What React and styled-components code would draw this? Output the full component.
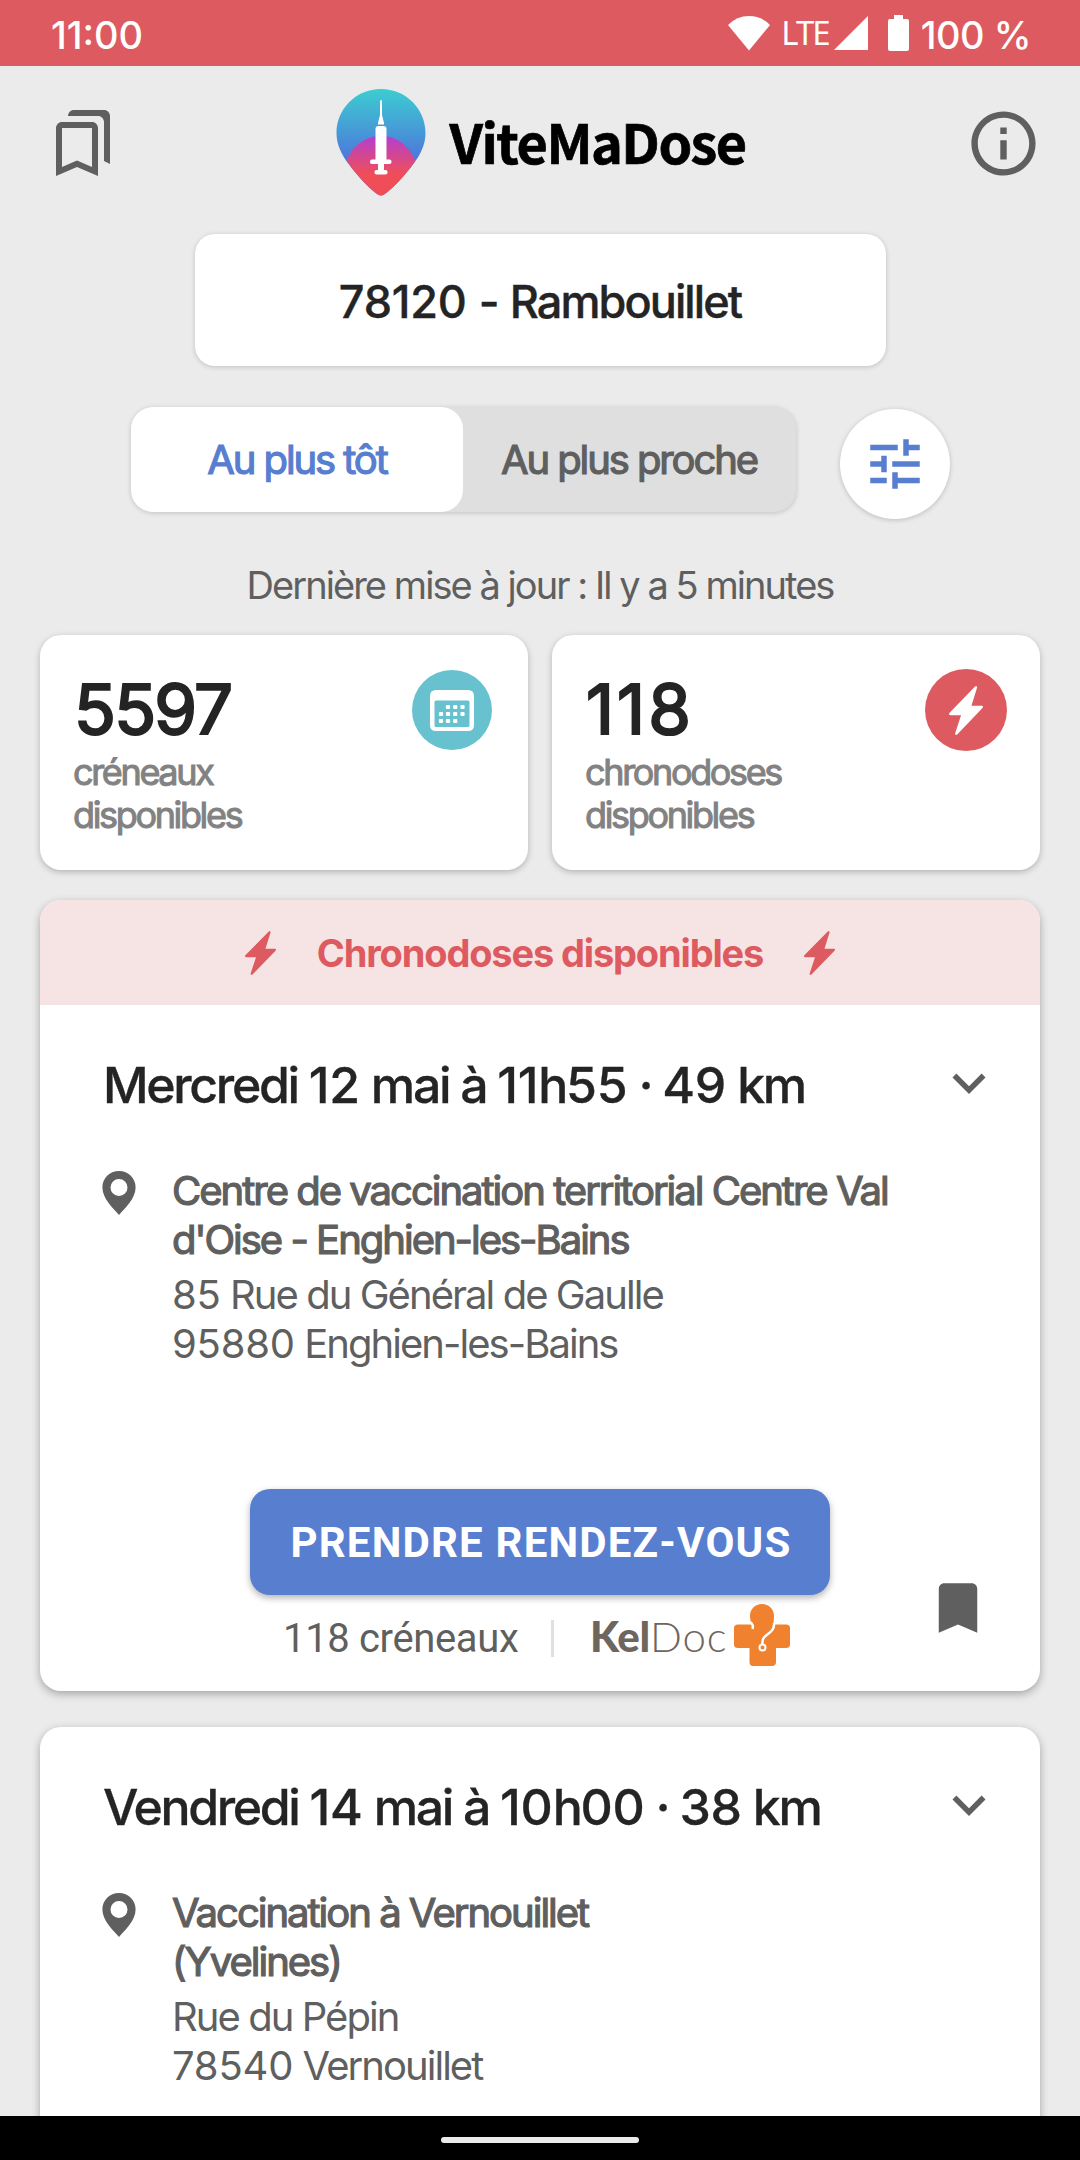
import React from "react";
import styled, { createGlobalStyle } from "styled-components";

const Global = createGlobalStyle`
  * { box-sizing: border-box; }
  html, body { margin: 0; padding: 0; background: #ebebeb; }
  body { font-family: Inter, Roboto, sans-serif; }
  svg { display: block; flex: none; }
  button { font-family: inherit; border: 0; padding: 0; margin: 0; background: none; color: inherit; }
  h1, h2, h3, p { margin: 0; }
`;

const Screen = styled.div`
  width: 1080px;
  height: 2160px;
  display: flex;
  flex-direction: column;
  overflow: hidden;
  background: #ebebeb;
`;

const StatusBar = styled.header`
  flex: none;
  height: 66px;
  padding: 0 49px 0 51px;
  display: flex;
  align-items: center;
  justify-content: space-between;
  background: #dd5b60;
  color: #fff;
`;

const StatusText = styled.span`
  font-size: 38px;
  line-height: 66px;
  font-weight: 500;
  letter-spacing: ${(p) => p.$spacing || "0"};
  padding-top: 3px;
  white-space: nowrap;
`;

const Network = styled.span`
  font-family: "Noto Sans", sans-serif;
  font-size: 33px;
  line-height: 66px;
  letter-spacing: -1.9px;
  margin: 0 5px 0 11px;
`;

const StatusIcons = styled.div`
  display: flex;
  align-items: center;
`;

const Battery = styled.svg`
  margin: 0 12px 0 20px;
`;

const Main = styled.main`
  flex: 1;
  min-height: 0;
  overflow: hidden;
  padding: 0 40px;
`;

const TopBar = styled.div`
  height: 168px;
  margin: 0 -40px;
  padding: 0 38px 0 47px;
  display: flex;
  align-items: center;
  justify-content: space-between;
  padding-bottom: 14px;
  color: #5f5f5f;
`;

const Brand = styled.div`
  display: flex;
  align-items: center;
  gap: 23px;
  margin: -2px 2px 0 0;
`;

const BrandName = styled.h1`
  font-family: "Noto Sans CJK SC", "Noto Sans", sans-serif;
  font-size: 54px;
  line-height: 80px;
  font-weight: 700;
  color: #000;
  letter-spacing: -1.5px;
  margin-top: -2px;
  -webkit-text-stroke: 0.7px #000;
`;

/* Numerals keep their natural width inside tightly tracked text. */
const Numerals = styled.span`
  letter-spacing: -0.2px;
`;

const Tracked = ({ children }) =>
  children.split(/(\d+)/).map((part, i) => (i % 2 ? <Numerals key={i}>{part}</Numerals> : part));

const SearchBox = styled.div`
  width: 691px;
  height: 132px;
  margin: 0 auto;
  border-radius: 20px;
  background: #fff;
  box-shadow: 0 1px 5px rgba(0, 0, 0, 0.18);
  line-height: 135px;
  text-align: center;
  font-size: 45px;
  font-weight: 500;
  letter-spacing: -1.9px;
  word-spacing: 2px;
  -webkit-text-stroke: 0.4px #242424;
  color: #242424;
`;

const Controls = styled.div`
  margin: 41px 0 0 91px;
  display: flex;
  align-items: flex-start;
  gap: 44px;
`;

const Toggle = styled.div`
  width: 665px;
  height: 105px;
  display: flex;
  border-radius: 22px;
  background: #dfdfdf;
  box-shadow: 0 1px 5px rgba(0, 0, 0, 0.18);
`;

const ToggleOption = styled.button`
  width: 332px;
  height: 105px;
  border-radius: 22px;
  background: ${(p) => (p.$active ? "#fff" : "transparent")};
  color: ${(p) => (p.$active ? "#587ed0" : "#5f5f5f")};
  font-size: 40px;
  font-weight: 400;
  letter-spacing: -2.1px;
  -webkit-text-stroke: 1.2px currentColor;
  white-space: nowrap;
`;

const FilterButton = styled.button`
  width: 110px;
  height: 110px;
  margin-top: 2px;
  border-radius: 50%;
  background: #fff;
  color: #587ed0;
  box-shadow: 0 1px 5px rgba(0, 0, 0, 0.2);
  display: flex;
  align-items: center;
  justify-content: center;
`;

const Updated = styled.p`
  margin-top: 36px;
  height: 61px;
  line-height: 61px;
  text-align: center;
  font-size: 38px;
  letter-spacing: -1.95px;
  color: #5f5f5f;
`;

const Stats = styled.div`
  margin-top: 19px;
  display: grid;
  grid-template-columns: 1fr 1fr;
  gap: 24px;
`;

const StatCard = styled.section`
  height: 235px;
  border-radius: 21px;
  background: #fff;
  box-shadow: 0 2px 6px rgba(0, 0, 0, 0.24);
  display: flex;
  justify-content: space-between;
  align-items: flex-start;
  padding: 34px ${(p) => p.$right}px 0 33px;
`;

const StatValue = styled.div`
  font-size: 69px;
  line-height: 80px;
  font-weight: 400;
  letter-spacing: ${(p) => p.$spacing}px;
  padding-left: 1px;
  -webkit-text-stroke: 2.2px #242424;
  color: #242424;
`;

const StatLabel = styled.div`
  margin-top: 2px;
  font-size: 36px;
  line-height: 43px;
  letter-spacing: -2.35px;
  -webkit-text-stroke: 1px #828282;
  color: #828282;
`;

const Card = styled.article`
  margin-top: ${(p) => p.$top}px;
  height: ${(p) => p.$height}px;
  border-radius: 21px;
  background: #fff;
  box-shadow: 0 3px 9px rgba(0, 0, 0, 0.3);
  overflow: hidden;
`;

const Banner = styled.div`
  height: 105px;
  background: #f6e4e4;
  color: #dd5b60;
  display: flex;
  align-items: center;
  justify-content: center;
  gap: 41px;
  font-size: 38px;
  font-weight: 700;
  letter-spacing: -1.15px;
`;

const CardHead = styled.div`
  height: 166px;
  padding: 45px 38px 0 63px;
  display: flex;
  justify-content: space-between;
  align-items: flex-start;
  color: #5f5f5f;
`;

const CardTitle = styled.h2`
  font-size: 50px;
  line-height: 70px;
  font-weight: 500;
  letter-spacing: -2.35px;
  -webkit-text-stroke: 0.3px #242424;
  color: #242424;
  white-space: nowrap;
`;

const Place = styled.div`
  display: flex;
  align-items: flex-start;
  gap: 36px;
  padding-left: 62px;
  color: #5f5f5f;
`;

const PlaceText = styled.div`
  width: ${(p) => p.$width}px;
  font-size: 40px;
  line-height: 49px;
  letter-spacing: -1.95px;
  margin-top: -5px;
`;

const PlaceName = styled.h3`
  font-size: 40px;
  line-height: 49px;
  font-weight: 400;
  letter-spacing: -2px;
  -webkit-text-stroke: 1.2px #5f5f5f;
  margin-bottom: 6px;
`;

const CardFoot = styled.div`
  margin-top: 121px;
  display: grid;
  grid-template-columns: 210px 580px 210px;
`;

const BookButton = styled.button`
  grid-column: 2;
  height: 106px;
  border-radius: 20px;
  background: #587ed0;
  color: #fff;
  font-family: Roboto, sans-serif;
  font-size: 42px;
  font-weight: 700;
  letter-spacing: 1.2px;
  padding-left: 2px;
  box-shadow: 0 3px 7px rgba(0, 0, 0, 0.3);
  white-space: nowrap;
`;

const SaveButton = styled.button`
  grid-column: 3;
  grid-row: 1 / span 2;
  width: 66px;
  height: 66px;
  margin: 86px 0 0 95px;
  color: #5f5f5f;
`;

const Provider = styled.div`
  grid-column: 2;
  display: flex;
  align-items: center;
  height: 82px;
  padding: 4px 0 0 33px;
`;

const Slots = styled.span`
  width: 268px;
  font-family: Roboto, sans-serif;
  font-size: 40px;
  letter-spacing: -0.35px;
  color: #5f5f5f;
  white-space: nowrap;
`;

const Divider = styled.span`
  width: 3px;
  height: 37px;
  background: #e0e0e0;
  margin-right: 36px;
`;

const KelDoc = styled.span`
  width: 144px;
  font-family: Lato, sans-serif;
  font-size: 42px;
  line-height: 60px;
  color: #6e655e;
  white-space: nowrap;
  margin-top: -4px;
`;

const Kel = styled.span`
  font-weight: 900;
  letter-spacing: -0.3px;
`;

const Doc = styled.span`
  font-weight: 300;
  letter-spacing: 0.9px;
`;

const NavBar = styled.footer`
  flex: none;
  height: 44px;
  background: #000;
  display: flex;
  align-items: center;
  justify-content: center;
  padding-top: 4px;
`;

const NavPill = styled.span`
  width: 198px;
  height: 6px;
  border-radius: 3px;
  background: #ebebeb;
`;

const StatIcon = styled.span`
  width: ${(p) => p.$size}px;
  height: ${(p) => p.$size}px;
  margin-top: ${(p) => p.$top}px;
  border-radius: 50%;
  background: ${(p) => p.$color};
  color: #fff;
  display: flex;
  align-items: center;
  justify-content: center;
`;

const Material = ({ size, children }) => (
  <svg width={size} height={size} viewBox="0 0 24 24" fill="currentColor">{children}</svg>
);

const Bolt = ({ width, height }) => (
  <svg width={width} height={height} viewBox="0 0 33 49" fill="currentColor" preserveAspectRatio="none">
    <path d="M25.3.5C26.4-.3 27.6.4 27.2 1.7L21.8 19.8H31.6C33 19.8 33.4 20.9 32.5 21.9L8.2 48.3C7 49.5 5.6 48.6 6 47.2L11.7 29.2H1.5C0 29.2-.4 27.9.6 26.8Z" />
  </svg>
);

const Calendar = () => (
  <svg width="44" height="41" viewBox="0 0 44 41">
    <path fill="#fff" fillRule="evenodd" d="M6 0H38Q44 0 44 6V35Q44 41 38 41H6Q0 41 0 35V6Q0 0 6 0ZM6 10.5Q4.5 10.5 4.5 12V35.5Q4.5 37 6 37H38Q39.500 37 39.500 35.500V12Q39.500 10.500 38 10.500Z" />
    {[[18, 17], [25.200, 17], [32.500, 17], [11, 24], [18, 24], [25.200, 24], [32.500, 24], [11, 31], [18, 31], [25.200, 31]].map(([x, y]) => (
      <rect key={`${x}-${y}`} x={x - 2.1} y={y - 2.1} width="4.200" height="4.200" rx="1" fill="#fff" />
    ))}
  </svg>
);

const LogoPin = () => (
  <svg width="90" height="107" viewBox="0 0 90 107">
    <defs>
      <linearGradient id="sky" x1="0" y1="0" x2="0" y2="1">
        <stop offset="0" stopColor="#3ccdd1" />
        <stop offset="0.68" stopColor="#4e74db" />
      </linearGradient>
      <linearGradient id="sun" gradientUnits="userSpaceOnUse" x1="0" y1="47" x2="0" y2="85">
        <stop offset="0" stopColor="#b43fd0" />
        <stop offset="1" stopColor="#ef4e58" />
      </linearGradient>
      <clipPath id="drop">
        <path d="M45 0C70 0 89.500 20 89.500 44C89.500 56 84 66 78 74C68 88 54 102 48 105.500Q45 107.500 42 105.500C36 102 22 88 12 74C6 66 .5 56 .5 44C.5 20 20 0 45 0Z" />
      </clipPath>
    </defs>
    <g clipPath="url(#drop)">
      <rect width="90" height="107" fill="url(#sky)" />
      <path d="M9 78C13 60 27 47 45 47S77 60 81 78L90 107H0Z" fill="url(#sun)" />
    </g>
    <g fill="#fff">
      <path d="M44 12Q45 10 46 12V26L48 34V35.500H42V34L44 26Z" />
      <rect x="39.500" y="37" width="11" height="37" rx="3" />
      <rect x="34" y="70.500" width="21.500" height="4.500" rx="2" />
      <rect x="42" y="74" width="6" height="9" />
      <rect x="38.500" y="81" width="13" height="4.500" rx="2" />
    </g>
  </svg>
);

const MapPin = () => (
  <svg width="34" height="44" viewBox="0 0 34 44">
    <path fill="currentColor" fillRule="evenodd" d="M17 0C26.400 0 33.600 7.200 33.600 16.500C33.600 28 22 38 17 44C12 38 .4 28 .4 16.500C.4 7.200 7.600 0 17 0ZM17 8A8.500 8.500 0 1 0 17 25A8.500 8.500 0 1 0 17 8Z" />
  </svg>
);

const ProviderMark = styled.svg`
  margin-top: -7px;
`;

const KelDocMark = () => (
  <ProviderMark width="56" height="62" viewBox="0 0 56 62">
    <path fill="#f0812f" d="M28 0C35 0 40 5 40 12C40 15 39.500 18 39.500 20.500H52Q56 20.500 56 24V40.500Q56 44 52 44H42V58Q42 62 38 62H19Q15.500 62 15.500 58V44H4Q0 44 0 40.500V24Q0 20.500 4 20.500H17C17 18 16 15 16 12C16 5 21 0 28 0Z" />
    <g fill="none" stroke="#fff" strokeWidth="2.500">
      <path d="M16 18Q20 21 18.500 25" />
      <path d="M40 19C41 31 27 29 28.500 40" />
      <circle cx="28.500" cy="43.500" r="3" strokeWidth="2" />
    </g>
  </ProviderMark>
);

const AppointmentHead = ({ title }) => (
  <CardHead>
    <CardTitle><Tracked>{title}</Tracked></CardTitle>
    <Material size={66}>
      <path d="M16.590 8.590L12 13.170 7.410 8.590 6 10l6 6 6-6z" />
    </Material>
  </CardHead>
);

const Address = ({ name, lines, width }) => (
  <Place>
    <MapPin />
    <PlaceText $width={width}>
      <PlaceName>{name}</PlaceName>
      {lines.map((line) => <p key={line}><Tracked>{line}</Tracked></p>)}
    </PlaceText>
  </Place>
);

export default function App() {
  return (
    <Screen>
      <Global />
      <StatusBar>
        <StatusText $spacing="0">11:00</StatusText>
        <StatusIcons>
          <svg width="42" height="36" viewBox="0 0 42 36"><path fill="#fff" d="M0 10Q9 1 21 1T42 10L21 35.500Z" /></svg>
          <Network>LTE</Network>
          <svg width="34" height="34" viewBox="0 0 34 34"><path fill="#fff" d="M34 0V34H0Z" /></svg>
          <Battery width="21" height="36" viewBox="0 0 21 36">
            <path fill="#fff" d="M6 0H15V4H19Q21 4 21 6V34Q21 36 19 36H2Q0 36 0 34V6Q0 4 2 4H6Z" />
          </Battery>
          <StatusText $spacing="-0.5px">100 %</StatusText>
        </StatusIcons>
      </StatusBar>

      <Main>
        <TopBar>
          <Material size={72}>
            <path d="M15 7v12.970l-4.210-1.810-.79-.34-.79.34L5 19.970V7h10m4-6H8.990C7.890 1 7 1.900 7 3h10c1.100 0 2 .9 2 2v13l2 1V3c0-1.100-.9-2-2-2zm-4 4H5c-1.100 0-2 .9-2 2v16l7-3 7 3V7c0-1.100-.9-2-2-2z" />
          </Material>
          <Brand>
            <LogoPin />
            <BrandName>ViteMaDose</BrandName>
          </Brand>
          <Material size={77}>
            <path d="M11 7h2v2h-2zm0 4h2v6h-2zm1-9C6.480 2 2 6.480 2 12s4.480 10 10 10 10-4.480 10-10S17.520 2 12 2zm0 18c-4.410 0-8-3.590-8-8s3.590-8 8-8 8 3.590 8 8-3.590 8-8 8z" />
          </Material>
        </TopBar>

        <SearchBox><Tracked>78120 - Rambouillet</Tracked></SearchBox>

        <Controls>
          <Toggle>
            <ToggleOption $active>Au plus tôt</ToggleOption>
            <ToggleOption>Au plus proche</ToggleOption>
          </Toggle>
          <FilterButton>
            <Material size={66}>
              <path d="M3 17v2h6v-2H3zM3 5v2h10V5H3zm10 16v-2h8v-2h-8v-2h-2v6h2zM7 9v2H3v2h4v2h2V9H7zm14 4v-2H11v2h10zm-6-4h2V7h4V5h-4V3h-2v6z" />
            </Material>
          </FilterButton>
        </Controls>

        <Updated>Dernière mise à jour : Il y a 5 minutes</Updated>

        <Stats>
          <StatCard $right={36}>
            <div>
              <StatValue $spacing={-1.8}>5597</StatValue>
              <StatLabel>créneaux<br />disponibles</StatLabel>
            </div>
            <StatIcon $size={80} $top={1} $color="#67c1cf"><Calendar /></StatIcon>
          </StatCard>
          <StatCard $right={33}>
            <div>
              <StatValue $spacing={3}>118</StatValue>
              <StatLabel>chronodoses<br />disponibles</StatLabel>
            </div>
            <StatIcon $size={82} $top={0} $color="#dd5b60"><Bolt width={34} height={49} /></StatIcon>
          </StatCard>
        </Stats>

        <Card $top={30} $height={791}>
          <Banner>
            <Bolt width={31} height={44} />
            Chronodoses disponibles
            <Bolt width={31} height={44} />
          </Banner>
          <AppointmentHead title="Mercredi 12 mai à 11h55 · 49 km" />
          <Address
            width={760}
            name="Centre de vaccination territorial Centre Val d'Oise - Enghien-les-Bains"
            lines={["85 Rue du Général de Gaulle", "95880 Enghien-les-Bains"]}
          />
          <CardFoot>
            <BookButton>PRENDRE RENDEZ-VOUS</BookButton>
            <SaveButton>
              <Material size={66}>
                <path d="M17 3H7c-1.100 0-1.990.9-1.990 2L5 21l7-3 7 3V5c0-1.100-.9-2-2-2z" />
              </Material>
            </SaveButton>
            <Provider>
              <Slots>118 créneaux</Slots>
              <Divider />
              <KelDoc><Kel>Kel</Kel><Doc>Doc</Doc></KelDoc>
              <KelDocMark />
            </Provider>
          </CardFoot>
        </Card>

        <Card $top={36} $height={791}>
          <AppointmentHead title="Vendredi 14 mai à 10h00 · 38 km" />
          <Address
            width={480}
            name="Vaccination à Vernouillet (Yvelines)"
            lines={["Rue du Pépin", "78540 Vernouillet"]}
          />
        </Card>
      </Main>

      <NavBar><NavPill /></NavBar>
    </Screen>
  );
}
